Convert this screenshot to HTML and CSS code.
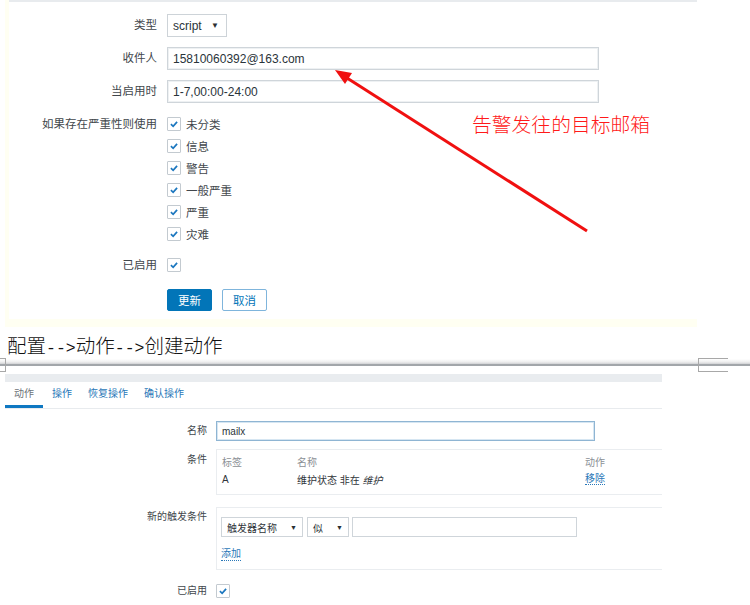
FILE: index.html
```html
<!DOCTYPE html>
<html lang="zh-CN">
<head>
<meta charset="utf-8">
<title>报警媒介与动作</title>
<link rel="stylesheet" href="styles.css">
</head>
<body>
<div class="page">
  <section class="shot1">
    <div class="shot1-inner">
      <div class="form1">
        <div class="lbl r-type">类型</div>
        <div class="ctl r-type"><span class="select sel-script">script<span class="caret">▼</span></span></div>

        <div class="lbl r-to">收件人</div>
        <div class="ctl r-to"><span class="input in-wide">15810060392@163.com</span></div>

        <div class="lbl r-when">当启用时</div>
        <div class="ctl r-when"><span class="input in-wide">1-7,00:00-24:00</span></div>

        <div class="lbl r-sev">如果存在严重性则使用</div>
        <div class="ctl r-sev">
          <ul class="sev-list">
            <li class="sev-item"><span class="cb"><svg viewBox="0 0 14 14"><path d="M3.4 7.2 L6 9.7 L10.6 4.5"/></svg></span>未分类</li>
            <li class="sev-item"><span class="cb"><svg viewBox="0 0 14 14"><path d="M3.4 7.2 L6 9.7 L10.6 4.5"/></svg></span>信息</li>
            <li class="sev-item"><span class="cb"><svg viewBox="0 0 14 14"><path d="M3.4 7.2 L6 9.7 L10.6 4.5"/></svg></span>警告</li>
            <li class="sev-item"><span class="cb"><svg viewBox="0 0 14 14"><path d="M3.4 7.2 L6 9.7 L10.6 4.5"/></svg></span>一般严重</li>
            <li class="sev-item"><span class="cb"><svg viewBox="0 0 14 14"><path d="M3.4 7.2 L6 9.7 L10.6 4.5"/></svg></span>严重</li>
            <li class="sev-item"><span class="cb"><svg viewBox="0 0 14 14"><path d="M3.4 7.2 L6 9.7 L10.6 4.5"/></svg></span>灾难</li>
          </ul>
        </div>

        <div class="lbl r-en">已启用</div>
        <div class="ctl r-en"><span class="cb"><svg viewBox="0 0 14 14"><path d="M3.4 7.2 L6 9.7 L10.6 4.5"/></svg></span></div>

        <div class="lbl r-btn"></div>
        <div class="ctl r-btn">
          <span class="btn btn-primary">更新</span>
          <span class="btn btn-alt">取消</span>
        </div>
      </div>
    </div>
  </section>

  <p class="caption">配置<span class="arr">--&gt;</span>动作<span class="arr">--&gt;</span>创建动作</p>

  <div class="pagebreak">
    <span class="mark mark-l"></span>
    <span class="mark mark-r"></span>
  </div>

  <section class="shot2">
    <div class="topbar"></div>
    <nav class="tabs">
      <span class="tab tab-active">动作</span>
      <span class="tab">操作</span>
      <span class="tab">恢复操作</span>
      <span class="tab">确认操作</span>
    </nav>
    <div class="form2">
      <div class="lbl2 r-name">名称</div>
      <div class="ctl2 r-name"><span class="input2 in-name">mailx</span></div>

      <div class="lbl2 r-cond">条件</div>
      <div class="ctl2 r-cond">
        <div class="box cond-box">
          <div class="cond-grid">
            <span class="th">标签</span><span class="th">名称</span><span class="th">动作</span>
            <span class="td">A</span><span class="td">维护状态 非在 <em>维护</em></span><span class="td"><span class="link">移除</span></span>
          </div>
        </div>
      </div>

      <div class="lbl2 r-new">新的触发条件</div>
      <div class="ctl2 r-new">
        <div class="box new-box">
          <div class="new-row">
            <span class="select2 sel-trig">触发器名称<span class="caret2">▼</span></span>
            <span class="select2 sel-op">似<span class="caret2">▼</span></span>
            <span class="input2 in-val"></span>
          </div>
          <span class="link add-link">添加</span>
        </div>
      </div>

      <div class="lbl2 r-en2">已启用</div>
      <div class="ctl2 r-en2"><span class="cb"><svg viewBox="0 0 14 14"><path d="M3.4 7.2 L6 9.7 L10.6 4.5"/></svg></span></div>
    </div>
  </section>

  <svg class="annot-arrow" viewBox="0 0 750 605" width="750" height="605">
    <line x1="587" y1="231" x2="347" y2="78" />
    <polygon points="335,70 352,73 345,84" />
  </svg>
  <div class="annot-text">告警发往的目标邮箱</div>
</div>
</body>
</html>
```

FILE: styles.css
```css
* { box-sizing: border-box; }

html, body {
  margin: 0;
  padding: 0;
  background: #ffffff;
}

.page {
  position: relative;
  width: 750px;
  height: 605px;
  overflow: hidden;
  font-family: "Liberation Sans", "Noto Sans CJK SC", sans-serif;
}

/* ---------- first screenshot ---------- */
.shot1 {
  margin-left: 5px;
  width: 692px;
  height: 327px;
  background: #fffff2;
  padding: 0 0 8px 4px;
}

.shot1-inner {
  height: 319px;
  background: #ffffff;
  border-top: 2px solid #e8ebee;
  padding-top: 12px;
}

.form1 {
  display: grid;
  grid-template-columns: 148px 1fr;
  column-gap: 10px;
  font-size: 11.5px;
  color: #42474c;
}

.lbl {
  text-align: right;
  line-height: 23px;
  height: 23px;
  white-space: nowrap;
}

.ctl {
  display: flex;
  align-items: center;
  min-height: 23px;
}

.r-to, .r-when { margin-top: 10px; }
.r-sev { margin-top: 10px; }
.lbl.r-sev { line-height: 22px; }
.r-en { margin-top: 9px; }
.lbl.r-en { line-height: 22px; height: 22px; }
.ctl.r-en { min-height: 22px; }
.r-btn { margin-top: 12px; }

.select {
  display: inline-flex;
  align-items: center;
  justify-content: space-between;
  width: 60px;
  height: 23px;
  padding: 0 7px 0 5px;
  border: 1px solid #cdd3d8;
  background: #fff;
  color: #2a343a;
  font-size: 12px;
}

.caret {
  font-size: 8px;
  color: #2b2f33;
}

.input {
  display: flex;
  align-items: center;
  height: 23px;
  padding: 0 5px;
  border: 1px solid #cfd5da;
  box-shadow: inset 0 0 0 1px #eef1f3;
  color: #2a343a;
  font-size: 12px;
}

.in-wide { width: 432px; }

.sev-list {
  list-style: none;
  margin: 0;
  padding: 0;
}

.sev-item {
  display: flex;
  align-items: center;
  height: 22px;
  gap: 5px;
}

.cb {
  display: inline-flex;
  width: 14px;
  height: 14px;
  border: 1px solid #c3cad0;
  background: #fff;
  border-radius: 1px;
}

.cb svg {
  width: 12px;
  height: 12px;
}

.cb path {
  fill: none;
  stroke: #1c77bf;
  stroke-width: 2;
}

.btn {
  display: inline-flex;
  align-items: center;
  justify-content: center;
  width: 45px;
  height: 22px;
  border-radius: 2px;
  font-size: 11.5px;
}

.btn-primary {
  background: #0275b8;
  color: #ffffff;
  border: 1px solid #0275b8;
}

.btn-alt {
  margin-left: 10px;
  background: #ffffff;
  color: #0275b8;
  border: 1px solid #7fb5dc;
}

/* ---------- caption ---------- */
.caption {
  margin: 0;
  height: 32px;
  padding: 4px 0 0 7px;
  line-height: 28px;
  font-family: "Noto Sans CJK SC", sans-serif;
  font-weight: 300;
  font-size: 19.5px;
  color: #111111;
  white-space: nowrap;
}

.arr {
  font-family: "Liberation Mono", monospace;
  font-size: 16.5px;
}

/* ---------- word page break ---------- */
.pagebreak {
  position: relative;
  height: 15px;
  background: linear-gradient(to bottom, #ffffff 0px, #eeeeee 3px, #cfd1d3 5px, #a2a6aa 5px, #a2a6aa 7px, #ffffff 7px);
}

.mark {
  position: absolute;
  top: -1px;
  height: 14px;
  border-top: 1px solid #a8a8a8;
  border-bottom: 1px solid #a8a8a8;
}

.mark-l {
  left: 0;
  width: 6px;
  border-right: 1px solid #a8a8a8;
}

.mark-r {
  left: 698px;
  width: 30px;
  border-left: 1px solid #a8a8a8;
}

/* ---------- second screenshot ---------- */
.shot2 {
  margin-left: 5px;
  width: 657px;
  height: 231px;
  background: #ffffff;
  font-size: 10px;
  color: #42474c;
}

.topbar {
  height: 8px;
  background: #e9ecef;
}

.tabs {
  display: flex;
  height: 27px;
  border-bottom: 1px solid #e8ebee;
}

.tab {
  display: flex;
  align-items: center;
  padding: 0 9px 3px 9px;
  margin-right: -2px;
  color: #2a78b8;
  font-size: 10px;
  border-bottom: 3px solid transparent;
}

.tab-active {
  color: #6d7378;
  border-bottom-color: #0f78c2;
  margin-right: 0;
}

.form2 {
  display: grid;
  grid-template-columns: 202px 1fr;
  column-gap: 9px;
  padding-top: 12px;
}

.lbl2 {
  text-align: right;
  line-height: 20px;
  white-space: nowrap;
}

.ctl2 {
  display: flex;
  align-items: flex-start;
  min-height: 20px;
}

.r-cond { margin-top: 8px; }
.lbl2.r-cond { line-height: 22px; }
.r-new { margin-top: 12px; }
.lbl2.r-new { padding-top: 1px; line-height: 18px; }
.r-en2 { margin-top: 14px; }
.lbl2.r-en2 { line-height: 14px; }

.input2 {
  display: flex;
  align-items: center;
  height: 20px;
  padding: 0 5px;
  border: 1px solid #cfd5da;
  background: #fff;
  color: #2a343a;
  font-size: 10px;
}

.in-name {
  width: 379px;
  border-color: #8fb5d3;
  box-shadow: inset 0 0 0 1px #d6e6f2;
}

.box {
  width: 100%;
  border: 1px solid #eaedf0;
  border-right: none;
}

.cond-box {
  height: 46px;
  padding: 3px 0 0 5px;
}

.cond-grid {
  display: grid;
  grid-template-columns: 75px 288px auto;
  grid-template-rows: 16px 20px;
  align-items: center;
}

.th {
  color: #8b9095;
}

.td {
  color: #30353a;
}

.td em {
  font-style: italic;
}

.link {
  color: #2a78b8;
  border-bottom: 1px dotted #2a78b8;
  line-height: 12px;
}

.new-box {
  height: 63px;
  padding: 9px 0 0 4px;
}

.new-row {
  display: flex;
  align-items: center;
}

.select2 {
  display: inline-flex;
  align-items: center;
  justify-content: space-between;
  height: 20px;
  padding: 0 5px;
  border: 1px solid #cfd5da;
  background: #fff;
  color: #30353a;
  font-size: 10px;
}

.caret2 {
  font-size: 7px;
  color: #2b2f33;
}

.sel-trig { width: 82px; }
.sel-op { width: 42px; margin-left: 4px; }
.in-val { width: 225px; margin-left: 3px; }

.add-link {
  display: inline-block;
  margin-top: 11px;
}

/* ---------- annotation overlay ---------- */
.annot-arrow {
  position: absolute;
  left: 0;
  top: 0;
  pointer-events: none;
}

.annot-arrow line {
  stroke: #f01010;
  stroke-width: 3;
}

.annot-arrow polygon {
  fill: #f01010;
}

.annot-text {
  position: absolute;
  left: 472px;
  top: 111px;
  font-family: "Noto Sans CJK SC", sans-serif;
  font-weight: 300;
  font-size: 19.8px;
  line-height: 26px;
  color: #ff1a1a;
  white-space: nowrap;
}
```
